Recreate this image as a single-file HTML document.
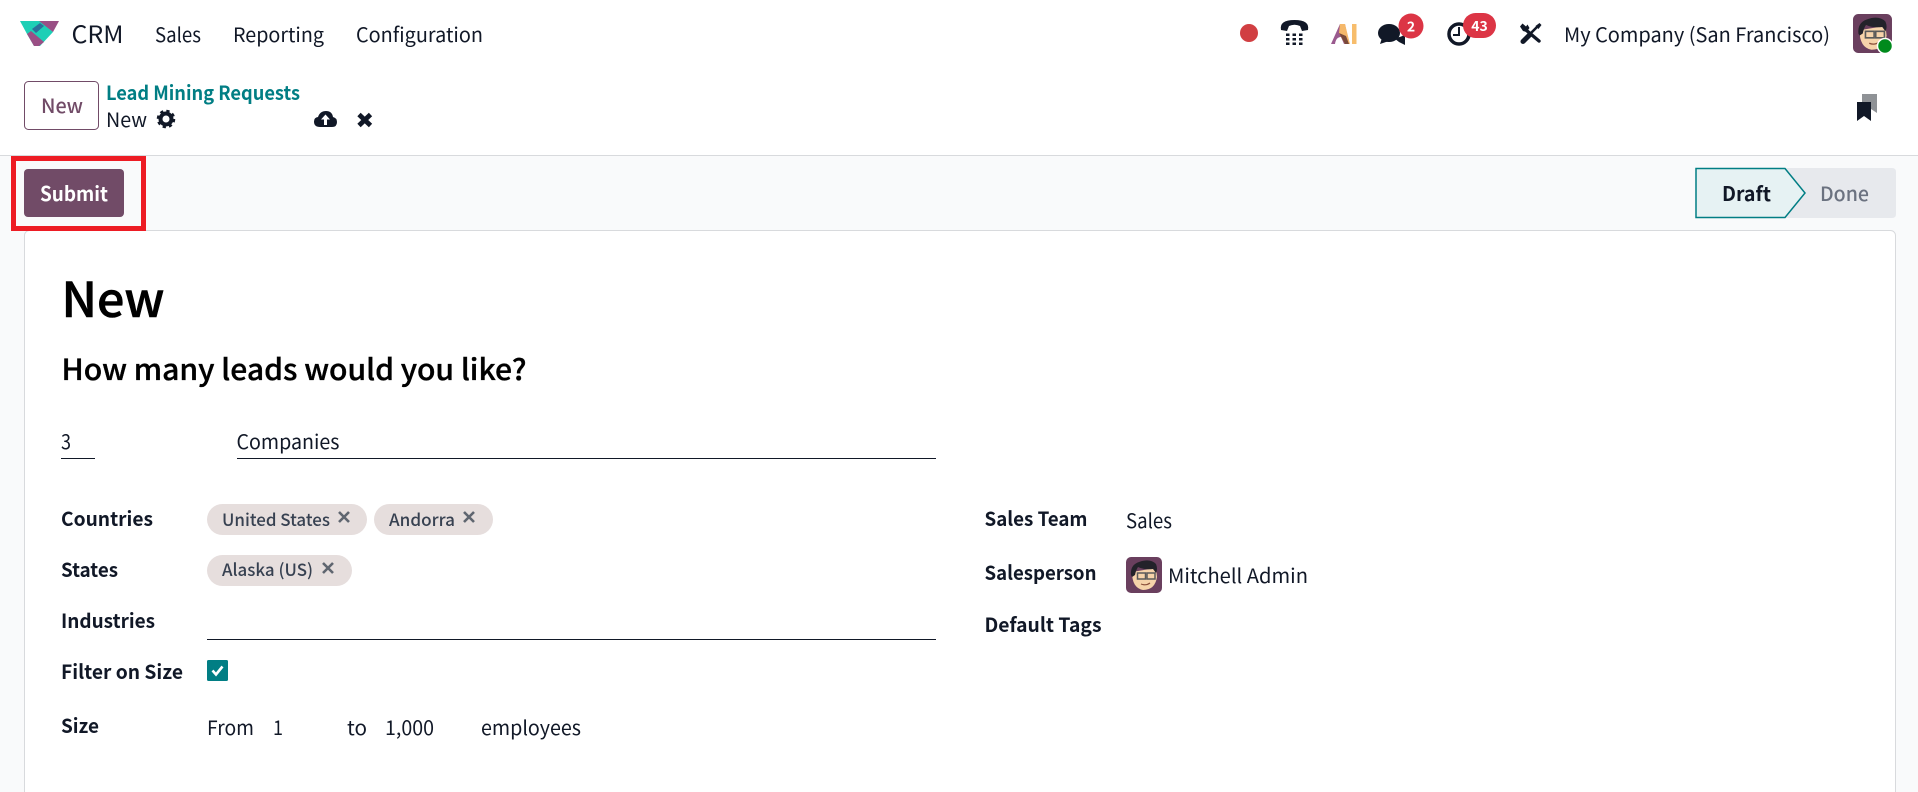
<!DOCTYPE html>
<html lang="en">
<head>
<meta charset="utf-8">
<title>Lead Mining Requests - CRM</title>
<style>
html,body{margin:0;padding:0;width:1918px;height:792px;overflow:hidden;background:#f9fafb}
svg{display:block;position:absolute;left:0;top:0}
text{font-family:"Noto Sans CJK JP","Liberation Sans",sans-serif;fill:#111827;font-size:20px}
.b{font-weight:600}
.l{font-size:19.5px;font-weight:600}
.t{font-size:17px;fill:#374151;font-weight:500}
</style>
</head>
<body>
<svg width="1918" height="792" viewBox="0 0 1918 792" xmlns="http://www.w3.org/2000/svg">
<defs>
<g id="face">
  <rect width="36" height="36" rx="5" fill="#6a3f5e"/>
  <path d="M6 15 Q6 31 17 33 Q29 33 31 20 L30 11 Z" fill="#f6d3aa"/>
  <path d="M5 18 Q4 8 13 5 Q24 1 30 7 Q32 12 30 16 L27 12 Q18 13 12 10 Q10 13 9 18 L6 20 Z" fill="#23222a"/>
  <rect x="11.500" y="16" width="8" height="6" fill="none" stroke="#5a5a5a" stroke-width="1.500"/>
  <rect x="21" y="16" width="8" height="6" fill="none" stroke="#5a5a5a" stroke-width="1.500"/>
  <path d="M15 27 Q20 29 24 26" fill="none" stroke="#8a4f3a" stroke-width="1.200"/>
</g>
</defs>

<!-- header -->
<rect x="0" y="0" width="1918" height="155" fill="#fff"/>
<rect x="0" y="155" width="1918" height="1" fill="#d8dadd"/>

<!-- logo -->
<path d="M20 21 H40 L53 32 L40 46 H34 L27 34 Z" fill="#1dcfb6"/>
<path d="M39 21 H59 L53 32 Z" fill="#9a4f85"/>
<path d="M27 34 L31 31 L44 42 L39 46 H34 Z" fill="#9a4f85"/>
<path d="M32 29 L40 23 L44 26 L36 33 Z" fill="#2a6f9a"/>
<text x="71.500" y="43" textLength="52" lengthAdjust="spacingAndGlyphs" style="font-size:24px">CRM</text>
<text x="155" y="42" textLength="46" lengthAdjust="spacingAndGlyphs">Sales</text>
<text x="233" y="42" textLength="91" lengthAdjust="spacingAndGlyphs">Reporting</text>
<text x="356" y="42" textLength="127" lengthAdjust="spacingAndGlyphs">Configuration</text>

<!-- systray -->
<circle cx="1249" cy="33" r="9" fill="#d13f42"/>
<path d="M1281 30 Q1279 20 1294.500 20 Q1310 20 1308 30 L1302 31 L1300 26 Q1294.500 23.500 1289 26 L1287 31 Z" fill="#111827"/>
<g fill="#111827">
  <rect x="1286" y="33.500" width="3.500" height="2.500"/><rect x="1292.500" y="33.500" width="3.500" height="2.500"/><rect x="1299" y="33.500" width="3.500" height="2.500"/>
  <rect x="1286" y="38" width="3.500" height="2.500"/><rect x="1292.500" y="38" width="3.500" height="2.500"/><rect x="1299" y="38" width="3.500" height="2.500"/>
  <rect x="1286" y="42.500" width="3.500" height="2.500"/><rect x="1292.500" y="42.500" width="3.500" height="2.500"/><rect x="1299" y="42.500" width="3.500" height="2.500"/>
</g>
<path d="M1331 44 L1340 24 H1345 L1349 44 H1344 L1341 37 Q1336 37 1335 44 Z" fill="#9a5a8e"/>
<path d="M1340 24 H1345 L1350 44 H1345 L1339 33 Z" fill="#f5b86a"/>
<path d="M1339 33 L1345 44 H1349 L1346 36 Z" fill="#7a4a3a"/>
<rect x="1352" y="24" width="4.500" height="20" fill="#f7bd6c"/>

<ellipse cx="1389" cy="33" rx="11" ry="9" fill="#111827"/>
<path d="M1382 38 L1380 44 L1389 41 Z" fill="#111827"/>
<path d="M1394 38 Q1404 37 1405 33 L1405 40 L1405 45 L1399 42 Z" fill="#111827"/>
<circle cx="1411" cy="26" r="12.500" fill="#dc3545"/>
<text x="1411" y="31.500" text-anchor="middle" class="b" style="font-size:14px;fill:#fff">2</text>

<circle cx="1459" cy="34" r="10" fill="none" stroke="#111827" stroke-width="3.500"/>
<path d="M1459 27 V35 H1453" fill="none" stroke="#111827" stroke-width="2"/>
<rect x="1463" y="13" width="33" height="25" rx="12.500" fill="#dc3545"/>
<text x="1479.500" y="31" text-anchor="middle" class="b" style="font-size:14px;fill:#fff">43</text>

<!-- tools: wrench + screwdriver -->
<path d="M1526 30 L1539 41" stroke="#111827" stroke-width="3.400" stroke-linecap="round" fill="none"/>
<path d="M1520 26.500 L1522.500 23.500 L1526 26.500 L1527.500 24.500 L1529.500 28 L1526.500 32 L1523 31 Z" fill="#111827"/>
<path d="M1537 27 L1531 33" stroke="#111827" stroke-width="2.600" fill="none"/>
<path d="M1535.500 26 L1539.500 23 L1541.500 25 L1538.500 29 Z" fill="#111827"/>
<path d="M1530 34.500 L1523 41.500" stroke="#111827" stroke-width="5" stroke-linecap="round" fill="none"/>
<text x="1564" y="42" textLength="266" lengthAdjust="spacingAndGlyphs">My Company (San Francisco)</text>
<g transform="translate(1853 14) scale(1.083)"><use href="#face"/></g>
<circle cx="1885" cy="46" r="7.500" fill="#008a1c" stroke="#fff" stroke-width="1.500"/>

<!-- breadcrumb row -->
<rect x="24.500" y="81.500" width="74" height="48" rx="4" fill="#fff" stroke="#714b67"/>
<text x="41" y="113" textLength="42" lengthAdjust="spacingAndGlyphs" style="fill:#714b67;font-weight:500">New</text>
<text x="106" y="100" textLength="194" lengthAdjust="spacingAndGlyphs" class="l" style="fill:#017e84">Lead Mining Requests</text>
<text x="106" y="127" textLength="41" lengthAdjust="spacingAndGlyphs">New</text>
<circle cx="166" cy="119" r="5.500" fill="none" stroke="#111827" stroke-width="4"/>
<circle cx="166" cy="119" r="8" fill="none" stroke="#111827" stroke-width="2.500" stroke-dasharray="3.200 3.100"/>
<path d="M320 127 Q314 127 314 121.500 Q314 117.500 318 117 Q320 111 326 111 Q332 111 333 117 Q337 118 337 122 Q337 127 332 127 Z" fill="#111827"/>
<path d="M325.500 114.500 L321 119.500 H324 V125 H327 V119.500 H330 Z" fill="#fff"/>
<path d="M359 114.500 L370.500 125.500 M370.500 114.500 L359 125.500" stroke="#111827" stroke-width="4.800" fill="none"/>
<path d="M1862 94 H1877 V113 L1871 109 V102 H1862 Z" fill="#8f9296"/>
<path d="M1857 102 H1871 V121 L1864 116 L1857 121 Z" fill="#111827"/>

<!-- submit -->
<rect x="24" y="169" width="100" height="48" rx="4" fill="#714b67"/>
<text x="40" y="201" textLength="68" lengthAdjust="spacingAndGlyphs" class="b" style="fill:#fff">Submit</text>

<!-- statusbar -->
<path d="M1785 168 H1892 Q1896 168 1896 172 V214 Q1896 218 1892 218 H1785 L1805 193 Z" fill="#e7e9ed"/>
<path d="M1696 168.500 H1785 L1805 193 L1785 217.500 H1696 Z" fill="#e6f2f3" stroke="#017e84" stroke-width="1.500"/>
<text x="1722" y="201" textLength="49" lengthAdjust="spacingAndGlyphs" class="b">Draft</text>
<text x="1820" y="201" textLength="49" lengthAdjust="spacingAndGlyphs" style="fill:#6b7280;font-weight:500">Done</text>

<!-- card -->
<rect x="24.500" y="230.500" width="1871" height="600" rx="5" fill="#fff" stroke="#d8dadd"/>
<rect x="13.500" y="158.500" width="130" height="70" fill="none" stroke="#ed1c24" stroke-width="5"/>

<text x="61.500" y="317" textLength="103" lengthAdjust="spacingAndGlyphs" style="font-size:48px;font-weight:500;fill:#000;stroke:#000;stroke-width:.6px">New</text>
<text x="61.500" y="380" textLength="465" lengthAdjust="spacingAndGlyphs" style="font-size:29px;font-weight:500;fill:#000;stroke:#000;stroke-width:.35px">How many leads would you like?</text>

<text x="61" y="449" textLength="10" lengthAdjust="spacingAndGlyphs">3</text>
<rect x="61" y="458" width="34" height="1" fill="#111827"/>
<text x="236.500" y="449" textLength="103" lengthAdjust="spacingAndGlyphs">Companies</text>
<rect x="237" y="458" width="699" height="1" fill="#111827"/>

<text x="61" y="526" textLength="92" lengthAdjust="spacingAndGlyphs" class="l">Countries</text>
<text x="61" y="577" textLength="57" lengthAdjust="spacingAndGlyphs" class="l">States</text>
<text x="61" y="628" textLength="94" lengthAdjust="spacingAndGlyphs" class="l">Industries</text>
<text x="61" y="679" textLength="122" lengthAdjust="spacingAndGlyphs" class="l">Filter on Size</text>
<text x="61" y="733" textLength="38" lengthAdjust="spacingAndGlyphs" class="l">Size</text>

<rect x="207" y="504" width="160" height="31" rx="15.500" fill="#e6dedd"/>
<text x="222" y="526" textLength="108" lengthAdjust="spacingAndGlyphs" class="t">United States</text>
<path d="M339 512 L349 522 M349 512 L339 522" stroke="#5f6670" stroke-width="2.600"/>
<rect x="374" y="504" width="119" height="31" rx="15.500" fill="#e6dedd"/>
<text x="389" y="526" textLength="66" lengthAdjust="spacingAndGlyphs" class="t">Andorra</text>
<path d="M464 512 L474 522 M474 512 L464 522" stroke="#5f6670" stroke-width="2.600"/>
<rect x="207" y="555" width="145" height="31" rx="15.500" fill="#e6dedd"/>
<text x="222" y="576" textLength="91" lengthAdjust="spacingAndGlyphs" class="t">Alaska (US)</text>
<path d="M323 563 L333 573 M333 563 L323 573" stroke="#5f6670" stroke-width="2.600"/>

<rect x="207" y="639" width="729" height="1" fill="#111827"/>
<rect x="207" y="660" width="21" height="21" rx="1.500" fill="#017e84"/>
<path d="M212.500 670.500 L216 674.500 L222.500 666.500" fill="none" stroke="#fff" stroke-width="2.600"/>

<text x="207" y="735" textLength="47" lengthAdjust="spacingAndGlyphs">From</text>
<text x="273" y="735" textLength="10" lengthAdjust="spacingAndGlyphs">1</text>
<text x="347" y="735" textLength="20" lengthAdjust="spacingAndGlyphs">to</text>
<text x="385" y="735" textLength="49" lengthAdjust="spacingAndGlyphs">1,000</text>
<text x="481" y="735" textLength="100" lengthAdjust="spacingAndGlyphs">employees</text>

<text x="984.500" y="526" textLength="103" lengthAdjust="spacingAndGlyphs" class="l">Sales Team</text>
<text x="1126" y="528" textLength="46" lengthAdjust="spacingAndGlyphs">Sales</text>
<text x="984.500" y="580" textLength="112" lengthAdjust="spacingAndGlyphs" class="l">Salesperson</text>
<g transform="translate(1126 557)"><use href="#face"/></g>
<text x="1168" y="583" textLength="140" lengthAdjust="spacingAndGlyphs">Mitchell Admin</text>
<text x="984.500" y="632" textLength="117" lengthAdjust="spacingAndGlyphs" class="l">Default Tags</text>
</svg>
</body>
</html>
